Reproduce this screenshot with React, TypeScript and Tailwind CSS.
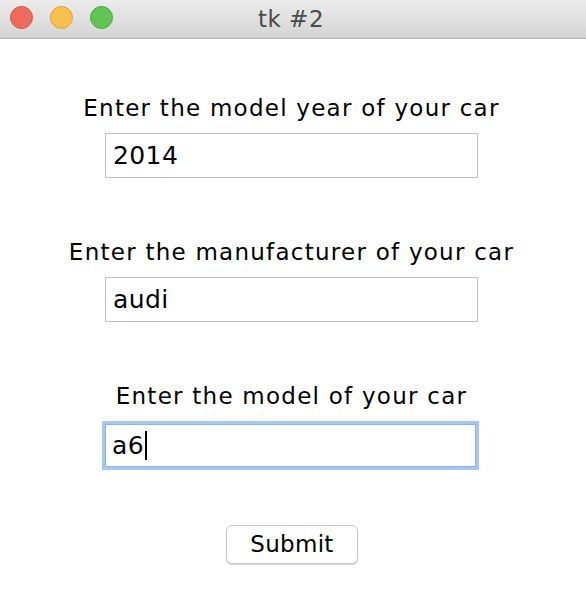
import { useState } from 'react';

const font = { fontFamily: '"DejaVu Sans", "Noto Sans", sans-serif' };

function Field({ label, value, focused }: { label: string; value: string; focused?: boolean }) {
  return (
    <div className="flex flex-col items-center">
      <div className="h-[26px] leading-[26px] pt-[1px] text-[23px] tracking-[1.25px] text-black whitespace-nowrap">
        {label}
      </div>
      {focused ? (
        <div className="mt-[13px] -ml-[2px] h-[49px] w-[377px] border-[3px] border-[#a7c7f3] bg-white">
          <div className="h-full w-full border border-[#8cb2ea] flex items-center px-[6px] text-[25px] tracking-[0.4px] text-black">
            <span>{value}</span>
            <span className="ml-[1px] w-[2px] h-[29px] bg-black" />
          </div>
        </div>
      ) : (
        <div className="mt-[13px] h-[45px] w-[373px] flex items-center px-[7px] border border-[#c0c0c0] bg-white text-[25px] tracking-[0.4px] text-black">
          <span>{value}</span>
        </div>
      )}
    </div>
  );
}

export default function App() {
  const [fields] = useState([
    { label: 'Enter the model year of your car', value: '2014' },
    { label: 'Enter the manufacturer of your car', value: 'audi' },
    { label: 'Enter the model of your car', value: 'a6', focused: true },
  ]);

  return (
    <div className="w-[586px] h-[592px] bg-white overflow-hidden" style={font}>
      <div className="relative h-[39px] border-b border-[#b1b1b1] bg-gradient-to-b from-[#ececec] to-[#d4d4d4] flex items-center">
        <div className="flex items-center gap-[17px] pl-[10px] -mt-[3px]">
          <span className="w-[23px] h-[23px] rounded-full bg-[#ee6a5f] border border-[#d6564c]" />
          <span className="w-[23px] h-[23px] rounded-full bg-[#f7bf50] border border-[#dba23a]" />
          <span className="w-[23px] h-[23px] rounded-full bg-[#61c454] border border-[#4fa83f]" />
        </div>
        <div className="absolute inset-0 flex items-center justify-center pr-[4px] text-[23px] tracking-[0.5px] text-[#4a4a4a]">
          tk #2
        </div>
      </div>

      <div className="flex flex-col items-center pr-[3px] pt-[55px] gap-[60px]">
        {fields.map(f => (
          <Field key={f.label} label={f.label} value={f.value} focused={f.focused} />
        ))}
        <button className="-mt-[5px] ml-[1px] w-[132px] h-[39px] rounded-[6px] border border-[#c6c6c6] bg-white shadow-[0_1px_1px_rgba(0,0,0,0.18)] text-[23px] tracking-[0.3px] text-black">
          Submit
        </button>
      </div>
    </div>
  );
}
